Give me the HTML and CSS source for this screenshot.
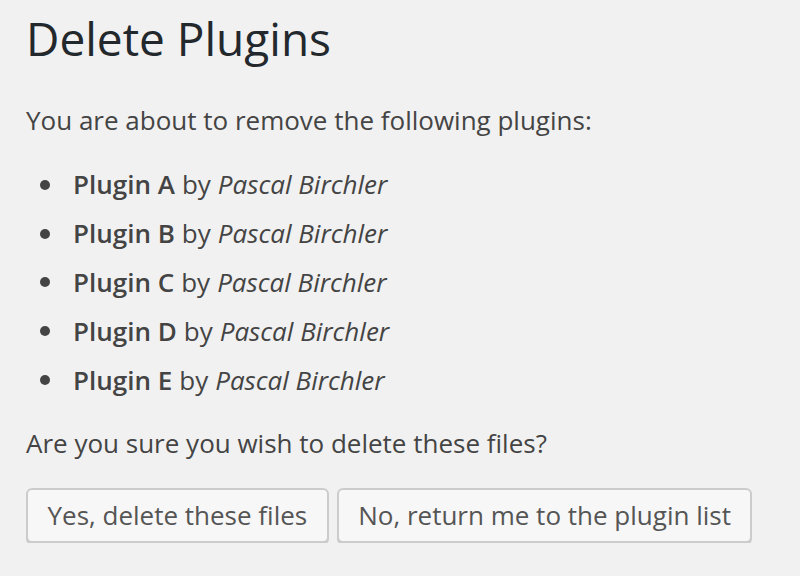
FILE: index.html
```html
<!DOCTYPE html>
<html lang="en">
<head>
<meta charset="utf-8">
<title>Delete Plugins</title>
<link rel="stylesheet" href="styles.css">
</head>
<body>
<div class="wrap">
  <h1 class="title">Delete Plugins</h1>
  <p class="intro">You are about to remove the following plugins:</p>
  <ul class="plugins">
    <li><strong>Plugin A</strong> by <em>Pascal Birchler</em></li>
    <li><strong>Plugin B</strong> by <em>Pascal Birchler</em></li>
    <li><strong>Plugin C</strong> by <em>Pascal Birchler</em></li>
    <li><strong>Plugin D</strong> by <em>Pascal Birchler</em></li>
    <li><strong>Plugin E</strong> by <em>Pascal Birchler</em></li>
  </ul>
  <p class="confirm">Are you sure you wish to delete these files?</p>
  <div class="actions">
    <button class="button" type="button">Yes, delete these files</button>
    <button class="button" type="button">No, return me to the plugin list</button>
  </div>
</div>
</body>
</html>
```

FILE: styles.css
```css
html, body {
  margin: 0;
  padding: 0;
  background: #f1f1f1;
}
body {
  font-family: "Open Sans", "Noto Sans", sans-serif;
  color: #444;
  font-size: 26px;
  line-height: 1.4;
}
.wrap {
  padding: 0 0 0 26px;
}
.title {
  font-size: 46px;
  font-weight: 400;
  line-height: 58px;
  color: #23282d;
  margin: 0;
  padding: 9px 0 8px 0;
}
.intro, .confirm {
  margin: 26px 0;
  line-height: 39px;
}
.confirm {
  margin-bottom: 25px;
}
.plugins {
  margin: 0;
  padding-left: 14px;
  list-style: none;
}
.plugins li {
  margin-bottom: 12.5px;
  display: flex;
  align-items: center;
}
.plugins li::before {
  content: "";
  flex: none;
  width: 10px;
  height: 10px;
  border-radius: 50%;
  background: #444;
  margin-right: 23px;
  margin-top: 1px;
}
.plugins li strong {
  font-weight: 600;
  margin-right: 0.27em;
}
.plugins li em {
  margin-left: 0.27em;
}
.actions {
  display: flex;
  gap: 8px;
}
.button {
  font-family: inherit;
  font-size: 26px;
  color: #555;
  background: #f7f7f7;
  border: 2px solid #ccc;
  border-radius: 6px;
  box-shadow: 0 2px 0 #ccc;
  height: 55px;
  padding: 0 19.5px 1px;
  line-height: 50px;
  cursor: pointer;
}
```
